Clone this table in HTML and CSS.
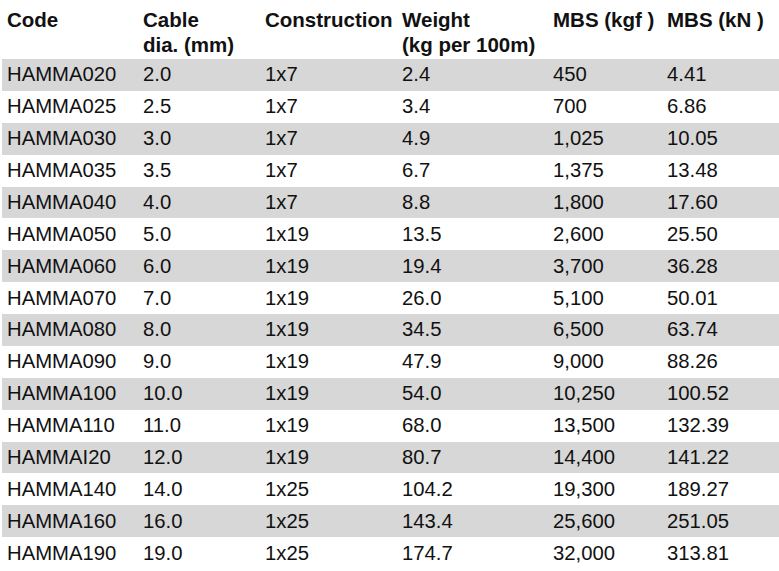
FILE: index.html
```html
<!DOCTYPE html>
<html>
<head>
<meta charset="utf-8">
<link rel="stylesheet" href="styles.css">
</head>
<body>
<div class="table">
  <div class="row head">
    <div>Code</div><div>Cable<br>dia. (mm)</div><div>Construction</div><div>Weight<br>(kg per 100m)</div><div>MBS (kgf )</div><div>MBS (kN )</div>
  </div>
  <div class="row alt"><div>HAMMA020</div><div>2.0</div><div>1x7</div><div>2.4</div><div>450</div><div>4.41</div></div>
  <div class="row"><div>HAMMA025</div><div>2.5</div><div>1x7</div><div>3.4</div><div>700</div><div>6.86</div></div>
  <div class="row alt"><div>HAMMA030</div><div>3.0</div><div>1x7</div><div>4.9</div><div>1,025</div><div>10.05</div></div>
  <div class="row"><div>HAMMA035</div><div>3.5</div><div>1x7</div><div>6.7</div><div>1,375</div><div>13.48</div></div>
  <div class="row alt"><div>HAMMA040</div><div>4.0</div><div>1x7</div><div>8.8</div><div>1,800</div><div>17.60</div></div>
  <div class="row"><div>HAMMA050</div><div>5.0</div><div>1x19</div><div>13.5</div><div>2,600</div><div>25.50</div></div>
  <div class="row alt"><div>HAMMA060</div><div>6.0</div><div>1x19</div><div>19.4</div><div>3,700</div><div>36.28</div></div>
  <div class="row"><div>HAMMA070</div><div>7.0</div><div>1x19</div><div>26.0</div><div>5,100</div><div>50.01</div></div>
  <div class="row alt"><div>HAMMA080</div><div>8.0</div><div>1x19</div><div>34.5</div><div>6,500</div><div>63.74</div></div>
  <div class="row"><div>HAMMA090</div><div>9.0</div><div>1x19</div><div>47.9</div><div>9,000</div><div>88.26</div></div>
  <div class="row alt"><div>HAMMA100</div><div>10.0</div><div>1x19</div><div>54.0</div><div>10,250</div><div>100.52</div></div>
  <div class="row"><div>HAMMA110</div><div>11.0</div><div>1x19</div><div>68.0</div><div>13,500</div><div>132.39</div></div>
  <div class="row alt"><div>HAMMAI20</div><div>12.0</div><div>1x19</div><div>80.7</div><div>14,400</div><div>141.22</div></div>
  <div class="row"><div>HAMMA140</div><div>14.0</div><div>1x25</div><div>104.2</div><div>19,300</div><div>189.27</div></div>
  <div class="row alt"><div>HAMMA160</div><div>16.0</div><div>1x25</div><div>143.4</div><div>25,600</div><div>251.05</div></div>
  <div class="row"><div>HAMMA190</div><div>19.0</div><div>1x25</div><div>174.7</div><div>32,000</div><div>313.81</div></div>
</div>
</body>
</html>
```
FILE: styles.css
```css
html, body {
  margin: 0;
  padding: 0;
  background: #ffffff;
}
body {
  font-family: "Liberation Sans", Arial, sans-serif;
  color: #111111;
  overflow: hidden;
}
.table {
  margin-left: 2px;
  display: flex;
  flex-direction: column;
}
.row {
  display: grid;
  grid-template-columns: 136px 122px 137px 151px 114px 1fr;
  height: 31.875px;
  align-items: center;
  font-size: 20.3px;
  line-height: 23px;
}
.row > div {
  padding-left: 5px;
  white-space: nowrap;
}
.row.alt {
  background: #d7d7d7;
}
.row.head {
  height: 59px;
  align-items: start;
  padding-top: 7px;
  box-sizing: border-box;
  font-size: 20.5px;
  font-weight: bold;
  line-height: 25px;
}
```
